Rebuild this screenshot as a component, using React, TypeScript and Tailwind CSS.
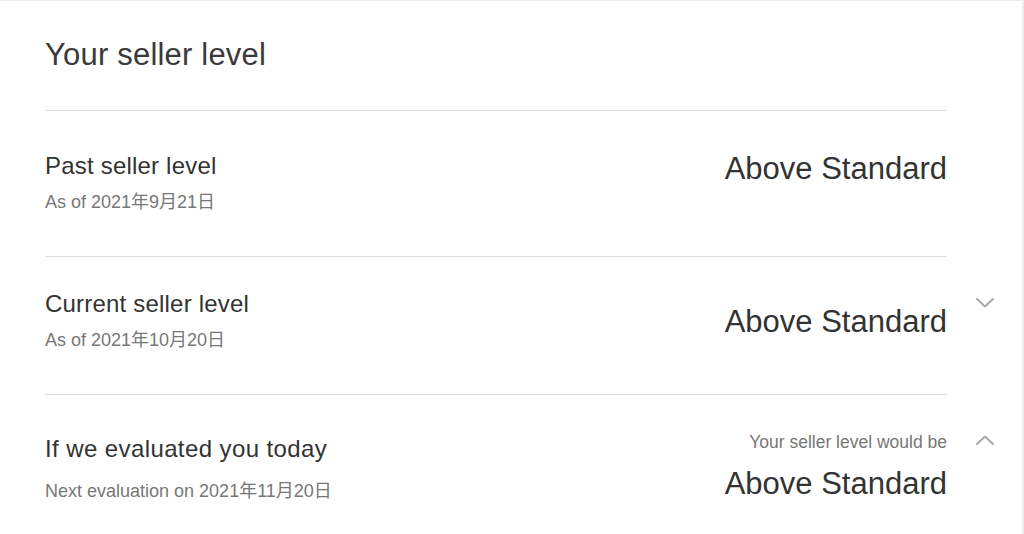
import React from "react";

const font = { fontFamily: '"Liberation Sans", "Noto Sans CJK JP", Arial, sans-serif' };

const Chevron: React.FC<{ up?: boolean }> = ({ up }) => (
	<svg width="18" height="10" viewBox="0 0 18 10" fill="none" className="block">
		<path
			d={up ? "M1 9 L9 1.5 L17 9" : "M1 1 L9 8.5 L17 1"}
			stroke="#a8a8a8"
			strokeWidth="2"
			strokeLinecap="round"
			strokeLinejoin="round"
		/>
	</svg>
);

export default function App() {
	return (
		<div className="min-h-screen bg-[#ececec] pt-px pr-[2px]" style={font}>
			<div className="bg-white h-[533px] pl-[45px] text-[#333]">
				<h1 className="pt-[36px] text-[31px] leading-[36px] text-[#3a3a3a] tracking-[0.2px]">Your seller level</h1>

				<div className="mt-[37px]">
					{/* past */}
					<div className="flex">
						<div className="w-[902px] border-t border-[#dedede] flex justify-between pb-[43px]">
							<div className="pt-[41px]">
								<div className="text-[24px] leading-[28px] tracking-[0.2px]">Past seller level</div>
								<div className="mt-[11px] text-[18px] leading-[22px] text-[#777]">As of 2021年9月21日</div>
							</div>
							<div className="pt-[40px] text-[31px] leading-[36px]">Above Standard</div>
						</div>
					</div>

					{/* current */}
					<div className="flex">
						<div className="w-[902px] border-t border-[#dedede] flex justify-between pb-[43px]">
							<div className="pt-[33px]">
								<div className="text-[24px] leading-[28px] tracking-[0.2px]">Current seller level</div>
								<div className="mt-[11px] text-[18px] leading-[22px] text-[#777]">As of 2021年10月20日</div>
							</div>
							<div className="pt-[47px] text-[31px] leading-[36px]">Above Standard</div>
						</div>
						<div className="ml-[29px] pt-[42px]">
							<Chevron />
						</div>
					</div>

					{/* today */}
					<div className="flex">
						<div className="w-[902px] border-t border-[#dedede] flex justify-between">
							<div className="pt-[40px]">
								<div className="text-[24px] leading-[28px] tracking-[0.4px]">If we evaluated you today</div>
								<div className="mt-[17px] text-[18px] leading-[22px] text-[#777]">Next evaluation on 2021年11月20日</div>
							</div>
							<div className="pt-[37px] flex flex-col items-end">
								<div className="text-[17.5px] leading-[20px] text-[#777]">Your seller level would be</div>
								<div className="mt-[14px] text-[31px] leading-[36px]">Above Standard</div>
							</div>
						</div>
						<div className="ml-[29px] pt-[41px]">
							<Chevron up />
						</div>
					</div>
				</div>
			</div>
		</div>
	);
}
